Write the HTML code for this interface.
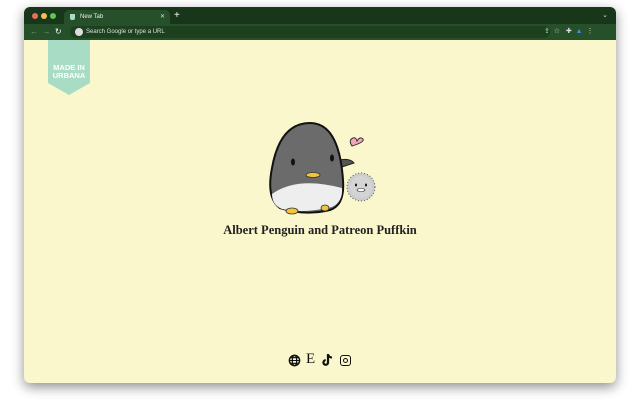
<!DOCTYPE html>
<html><head><style>
*{margin:0;padding:0;box-sizing:border-box}
body{width:640px;height:400px;background:#fff;position:relative;overflow:hidden;font-family:"Liberation Sans",sans-serif}
.win{position:absolute;left:24px;top:7px;width:592px;height:376px;border-radius:6px;overflow:hidden;box-shadow:0 4px 12px rgba(0,0,0,.45);background:#fbf7cc}
.title{position:absolute;left:0;top:0;width:592px;height:17px;background:#18361a}
.tool{position:absolute;left:0;top:17px;width:592px;height:16px;background:#26502a}
.dot{position:absolute;top:6px;width:6px;height:6px;border-radius:50%}
.tab{position:absolute;left:40px;top:3px;width:106px;height:14px;background:#26502a;border-radius:5px 5px 0 0;color:#e8f0e8;font-size:6px;line-height:14px;padding-left:16px}
.badge{position:absolute;left:48px;top:40px;width:42px;height:43px;background:#a8dcc4}
.badgetri{position:absolute;left:48px;top:83px;width:0;height:0;border-left:21px solid transparent;border-right:21px solid transparent;border-top:12px solid #a8dcc4}
.cap{position:absolute;left:0;top:223px;width:640px;text-align:center;font-family:"Liberation Serif",serif;font-weight:bold;font-size:12.5px;color:#222}
</style></head><body>
<div class="win">
 <div class="title">
  <div class="dot" style="left:8px;background:#ed6a5e"></div>
  <div class="dot" style="left:17px;background:#f5bf4f"></div>
  <div class="dot" style="left:26px;background:#61c554"></div>
  <div class="tab"><span style="position:absolute;left:6px;top:4px;width:5px;height:6px;background:#a8dcc4;border-radius:0 0 2px 2px"></span>New Tab<span style="position:absolute;right:5px;top:0;color:#ddd">✕</span></div>
  <div style="position:absolute;left:150px;top:0;color:#fff;font-size:10px;line-height:17px">+</div>
  <div style="position:absolute;right:8px;top:0;color:#ddd;font-size:7px;line-height:17px">⌄</div>
 </div>
 <div class="tool">
  <div style="position:absolute;left:6px;top:0;color:#7a9a7a;font-size:8px;line-height:16px">←&nbsp;&nbsp;→&nbsp;&nbsp;<span style="color:#fff">↻</span></div>
  <div style="position:absolute;left:46px;top:2px;width:480px;height:12px;background:#1d401f;border-radius:6px"></div>
  <div style="position:absolute;left:51px;top:4px;width:8px;height:8px;border-radius:50%;background:#ddd"></div>
  <div style="position:absolute;left:62px;top:0;color:#d6e2d6;font-size:6px;line-height:16px">Search Google or type a URL</div>
  <div style="position:absolute;left:520px;top:0;color:#ddd;font-size:7px;line-height:16px">⇪&nbsp;&nbsp;☆&nbsp;&nbsp;&nbsp;✚&nbsp;&nbsp;<span style="color:#4a8ad8">▲</span>&nbsp;&nbsp;⋮</div>
 </div>
</div>
<div class="badge"></div><div class="badgetri"></div>
<div style="position:absolute;left:48px;top:64px;width:42px;text-align:center;color:#fff;font-weight:bold;font-size:7.5px;line-height:8px;font-family:'Liberation Sans Narrow','Liberation Sans',sans-serif">MADE IN<br>URBANA</div>
<svg style="position:absolute;left:260px;top:115px" width="130" height="105" viewBox="260 115 130 105">
 <path d="M352 146 q-4 -6 1 -8 q3 -1 4 3 q3 -5 6 -2 q2 3 -11 7z" fill="#f4a6b6" stroke="#333" stroke-width="1"/>
 <circle cx="361" cy="187" r="14" fill="#ccc" stroke="#555" stroke-width="1" stroke-dasharray="1 2"/>
 <circle cx="361" cy="187" r="11" fill="#d4d4d4"/>
 <path d="M340 160 q10 -2 14 3 l-12 4z" fill="#555" stroke="#222"/>
 <path d="M310 123 q-30 0 -38 45 q-6 30 8 40 q25 8 50 2 q15 -5 13 -30 q-4 -57 -33 -57z" fill="#6b6b6b" stroke="#111" stroke-width="2"/>
 <path d="M272 194 q25 -18 70 -6 q1 14 -10 19 q-30 7 -50 2 q-10 -4 -10 -15z" fill="#eee"/>
 <ellipse cx="293" cy="162" rx="2" ry="3.5" fill="#111"/>
 <ellipse cx="332" cy="158" rx="2" ry="3.5" fill="#111"/>
 <ellipse cx="313" cy="175" rx="7" ry="2.5" fill="#f2c43c" stroke="#333" stroke-width=".8"/>
 <ellipse cx="292" cy="211" rx="6" ry="3" fill="#f2c43c" stroke="#333" stroke-width=".8"/>
 <ellipse cx="325" cy="208" rx="4" ry="3" fill="#f2c43c" stroke="#333" stroke-width=".8"/>
 <ellipse cx="356" cy="185" rx="1" ry="1.5" fill="#111"/><ellipse cx="366" cy="185" rx="1" ry="1.5" fill="#111"/>
 <ellipse cx="361" cy="190" rx="4" ry="1.5" fill="#fff" stroke="#333" stroke-width=".6"/>
</svg>
<div class="cap">Albert Penguin and Patreon Puffkin</div>
<div style="position:absolute;left:288px;top:354px;width:13px;height:13px">
 <svg width="13" height="13" viewBox="0 0 14 14"><circle cx="7" cy="7" r="5.5" fill="none" stroke="#111" stroke-width="1.6"/><ellipse cx="7" cy="7" rx="2.4" ry="5.5" fill="none" stroke="#111" stroke-width="1.3"/><path d="M1.5 7h11M2.5 4h9M2.5 10h9" stroke="#111" stroke-width="1.2"/></svg></div>
<div style="position:absolute;left:306px;top:351px;font-family:'Liberation Serif',serif;font-size:15px;color:#111">E</div>
<svg style="position:absolute;left:322px;top:353px" width="12" height="14" viewBox="0 0 12 14"><path d="M6 1v8.5a2.3 2.3 0 1 1-2.3-2.3" fill="none" stroke="#111" stroke-width="2.2"/><path d="M6 1.5q1 3 4 3" fill="none" stroke="#111" stroke-width="2"/></svg>
<div style="position:absolute;left:340px;top:355px;width:11px;height:11px;border:1.5px solid #111;border-radius:3px"><div style="position:absolute;left:1.5px;top:1.5px;width:5px;height:5px;border:1.3px solid #111;border-radius:50%"></div></div>
</body></html>
